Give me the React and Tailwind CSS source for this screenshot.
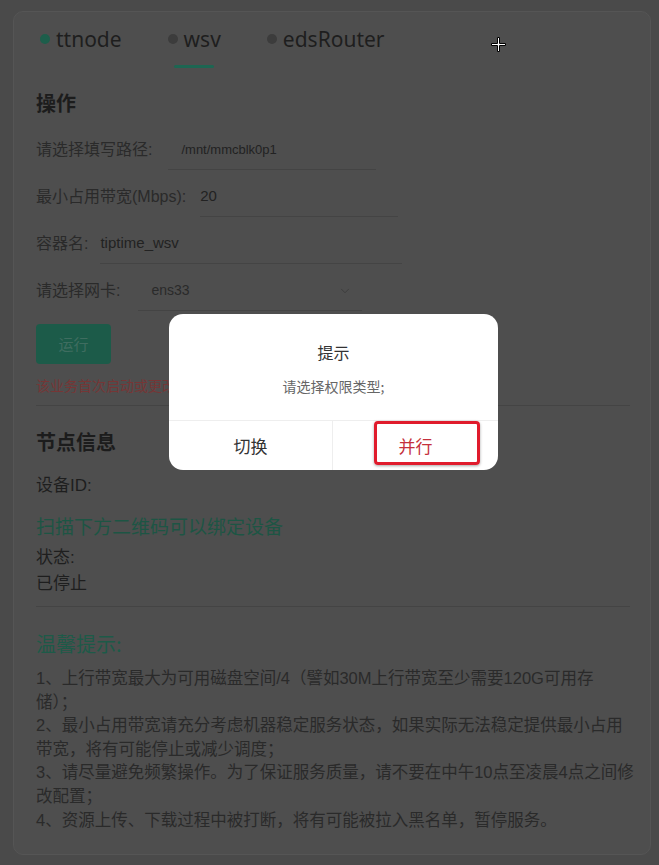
import React from 'react';
import { ChevronDown } from 'lucide-react';

const body = { fontFamily: '"Liberation Sans", "Noto Sans CJK SC", sans-serif' };
const cjk = { fontFamily: '"Noto Sans CJK SC", "Liberation Sans", sans-serif' };

const tabs = [
    { name: 'ttnode', dot: 'bg-[#1d5e4b]', active: false },
    { name: 'wsv', dot: 'bg-[#3c3c3c]', active: true },
    { name: 'edsRouter', dot: 'bg-[#3c3c3c]', active: false },
];

// visual lines as in the screenshot
const tips = [
    '1、上行带宽最大为可用磁盘空间/4（譬如30M上行带宽至少需要120G可用存',
    '储）；',
    '2、最小占用带宽请充分考虑机器稳定服务状态，如果实际无法稳定提供最小占用',
    '带宽，将有可能停止或减少调度；',
    '3、请尽量避免频繁操作。为了保证服务质量，请不要在中午10点至凌晨4点之间修',
    '改配置；',
    '4、资源上传、下载过程中被打断，将有可能被拉入黑名单，暂停服务。',
];

const FormRow = ({ label, children, inputClass }) => (
    <div className="flex h-[40px] items-center mb-[7px]">
        <span className="text-[16px] text-[#2a2a2a] whitespace-nowrap">{label}</span>
        <div className={`h-full flex items-center border-b border-[#444444] ${inputClass}`}>
            {children}
        </div>
    </div>
);

export default function App() {
    return (
        <div className="relative min-h-[865px] bg-[#4a4a4a] pt-[11px] pl-[13px] pr-[8px]" style={body}>
            <div className="w-[638px] h-[844px] rounded-[10px] border border-[#555555] bg-[#4e4e4e] pt-[13px] pl-[22px] pr-[20px]">
                {/* tabs */}
                <div className="flex gap-[46px] pl-[4px]">
                    {tabs.map((t) => (
                        <div key={t.name} className="flex flex-col items-center">
                            <div className="flex items-center h-[30px]">
                                <span className={`w-[10px] h-[10px] rounded-full mr-[6px] -mt-[2px] ${t.dot}`} />
                                <span className="text-[21px] text-[#1e1e1e]" style={{ fontFamily: '"Noto Sans", sans-serif' }}>
                                    {t.name}
                                </span>
                            </div>
                            <div className={`mt-[10px] h-[3px] w-[40px] rounded-full ${t.active ? 'bg-[#1d6652]' : 'bg-transparent'}`} />
                        </div>
                    ))}
                </div>

                <h2 className="mt-[21px] text-[20px] leading-[28px] font-bold text-[#1c1c1c]" style={cjk}>操作</h2>

                <div className="mt-[13px]">
                    <FormRow label="请选择填写路径:" inputClass="ml-[16px] w-[208px] pl-[13px]">
                        <span className="text-[13px] text-[#222]">/mnt/mmcblk0p1</span>
                    </FormRow>
                    <FormRow label="最小占用带宽(Mbps):" inputClass="ml-[14px] w-[198px]">
                        <span className="text-[15px] text-[#222]">20</span>
                    </FormRow>
                    <FormRow label="容器名:" inputClass="ml-[12px] w-[302px]">
                        <span className="text-[15px] text-[#222]">tiptime_wsv</span>
                    </FormRow>
                    <FormRow label="请选择网卡:" inputClass="ml-[18px] w-[224px] pl-[13px] pr-[10px] justify-between">
                        <span className="text-[14px] text-[#2a2a2a]">ens33</span>
                        <ChevronDown size={14} strokeWidth={1.5} className="text-[#3a3a3a]" />
                    </FormRow>
                </div>

                <button className="mt-[6px] w-[75px] h-[40px] rounded-[4px] bg-[#1c5b49] text-[15px] text-[#3f6d60]" style={cjk}>
                    运行
                </button>

                <p className="mt-[11px] text-[14px] leading-[20px] text-[#763636] whitespace-nowrap" style={cjk}>
                    该业务首次启动或更改配置后请耐心等待
                </p>

                <div className="mt-[10px] border-t border-[#444444]" />

                <h2 className="mt-[22px] text-[20px] leading-[28px] font-bold text-[#1c1c1c]" style={cjk}>节点信息</h2>
                <p className="mt-[18px] text-[17px] leading-[24px] text-[#1e1e1e]">设备ID:</p>
                <p className="mt-[14px] text-[19px] leading-[28px] text-[#1d5544]" style={cjk}>扫描下方二维码可以绑定设备</p>
                <p className="mt-[6px] text-[17px] leading-[24px] text-[#1e1e1e]">状态:</p>
                <p className="mt-[2px] text-[17px] leading-[24px] text-[#1e1e1e]">已停止</p>

                <div className="mt-[10px] border-t border-[#444444]" />

                <h2 className="mt-[23px] text-[20px] leading-[28px] text-[#1d5a48]" style={cjk}>温馨提示:</h2>
                <div className="mt-[9px] text-[16.5px] leading-[23.6px] text-[#2a2a2a]">
                    {tips.map((t) => (
                        <p key={t} className="whitespace-nowrap">{t}</p>
                    ))}
                </div>
            </div>

            {/* dialog */}
            <div className="absolute left-[169px] top-[314px] w-[329px] h-[156px] rounded-[14px] bg-white overflow-hidden flex flex-col" style={cjk}>
                <div className="h-[106px] flex flex-col items-center">
                    <p className="mt-[26px] text-[16px] leading-[24px] text-[#333]">提示</p>
                    <p className="mt-[12px] text-[14px] leading-[20px] text-[#666]">请选择权限类型;</p>
                </div>
                <div className="flex flex-1 border-t border-[#eeeeee]">
                    <div className="w-[164px] flex items-center justify-center border-r border-[#eeeeee] text-[17px] text-[#333]">切换</div>
                    <div className="flex-1 flex items-center justify-center text-[17px] text-[#c5303c]">并行</div>
                </div>
                <div className="absolute left-[205px] top-[107px] w-[106px] h-[44px] rounded-[4px] border-[3px] border-[#e01b2c] shadow-[0_1px_3px_rgba(0,0,0,0.35)]" />
            </div>

            {/* mouse cursor */}
            <svg className="absolute left-[490px] top-[36px]" width="17" height="17" viewBox="0 0 17 17">
                <path d="M7.5 1.5h2v6h6v2h-6v6h-2v-6h-6v-2h6z" fill="#fff" stroke="#000" strokeWidth="1" />
            </svg>
        </div>
    );
}
